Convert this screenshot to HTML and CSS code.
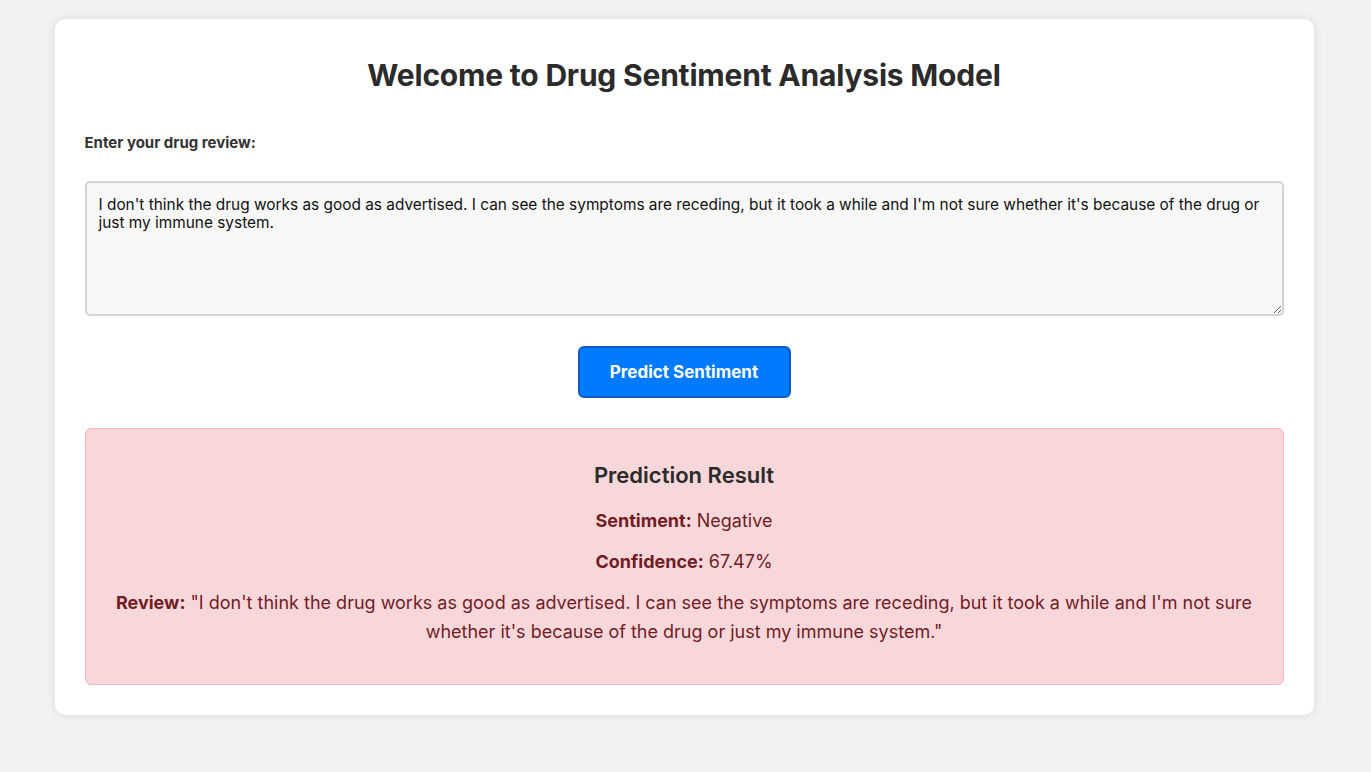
FILE: index.html
```html
<!DOCTYPE html>
<html lang="en">
<head>
<meta charset="utf-8">
<title>Drug Sentiment Analysis</title>
<link rel="stylesheet" href="styles.css">
</head>
<body>
<div class="card">
  <h1 class="title">Welcome to Drug Sentiment Analysis Model</h1>
  <form class="form">
    <label class="label" for="review">Enter your drug review:</label>
    <textarea id="review" class="input">I don't think the drug works as good as advertised. I can see the symptoms are receding, but it took a while and I'm not sure whether it's because of the drug or just my immune system.</textarea>
    <div class="actions">
      <button type="button" class="btn">Predict Sentiment</button>
    </div>
  </form>
  <div class="result">
    <h2 class="result-title">Prediction Result</h2>
    <p class="line"><strong>Sentiment:</strong> Negative</p>
    <p class="line"><strong>Confidence:</strong> 67.47%</p>
    <p class="line"><strong>Review:</strong> "I don't think the drug works as good as advertised. I can see the symptoms are receding, but it took a while and I'm not sure whether it's because of the drug or just my immune system."</p>
  </div>
</div>
</body>
</html>
```
FILE: styles.css
```css
* { box-sizing: border-box; }
html, body { margin: 0; padding: 0; }
body {
  background: #f2f2f2;
  font-family: Inter, "Noto Sans", "Liberation Sans", sans-serif;
  color: #333;
  padding: 19px 3px 40px 0;
}
.card {
  width: 1259px;
  margin: 0 auto;
  background: #fff;
  border-radius: 10px;
  padding: 30px;
  box-shadow: 0 0 10px rgba(0,0,0,0.1);
}
.title {
  margin: 7px 0 0;
  text-align: center;
  font-size: 30px;
  line-height: 38px;
  font-weight: 700;
  letter-spacing: -0.2px;
  color: #2b2b2b;
}
.form { display: flex; flex-direction: column; }
.label {
  margin-top: 39px;
  font-size: 15px;
  line-height: 20px;
  font-weight: 700;
  color: #333;
}
.input {
  margin-top: 28px;
  height: 135px;
  width: 100%;
  background: #f8f8f8;
  border: 2px solid #d4d4d4;
  border-radius: 5px;
  padding: 13px 12px 12px;
  font-family: Inter, "Noto Sans", "Liberation Sans", sans-serif;
  font-size: 15.4px;
  line-height: 18px;
  color: #111;
  resize: vertical;
}
.actions {
  display: flex;
  justify-content: center;
  margin-top: 30px;
}
.btn {
  width: 213px;
  height: 52px;
  background: #007bff;
  border: 2px solid #0a5cc2;
  border-radius: 6px;
  color: #fff;
  font-family: Inter, "Noto Sans", "Liberation Sans", sans-serif;
  font-size: 17px;
  font-weight: 700;
  cursor: pointer;
}
.result {
  margin-top: 30px;
  background: #f8d7da;
  border: 1px solid #f1b9bf;
  border-radius: 6px;
  padding: 20px 20px 38px;
  text-align: center;
  color: #721c24;
}
.result-title {
  margin: 13px 0 17px;
  font-size: 22px;
  line-height: 27px;
  font-weight: 600;
  color: #2b2b2b;
}
.line {
  margin: 12px 0;
  font-size: 18px;
  line-height: 29px;
}
.line:last-child { margin-bottom: 0; }
.line strong { font-weight: 700; }
```
